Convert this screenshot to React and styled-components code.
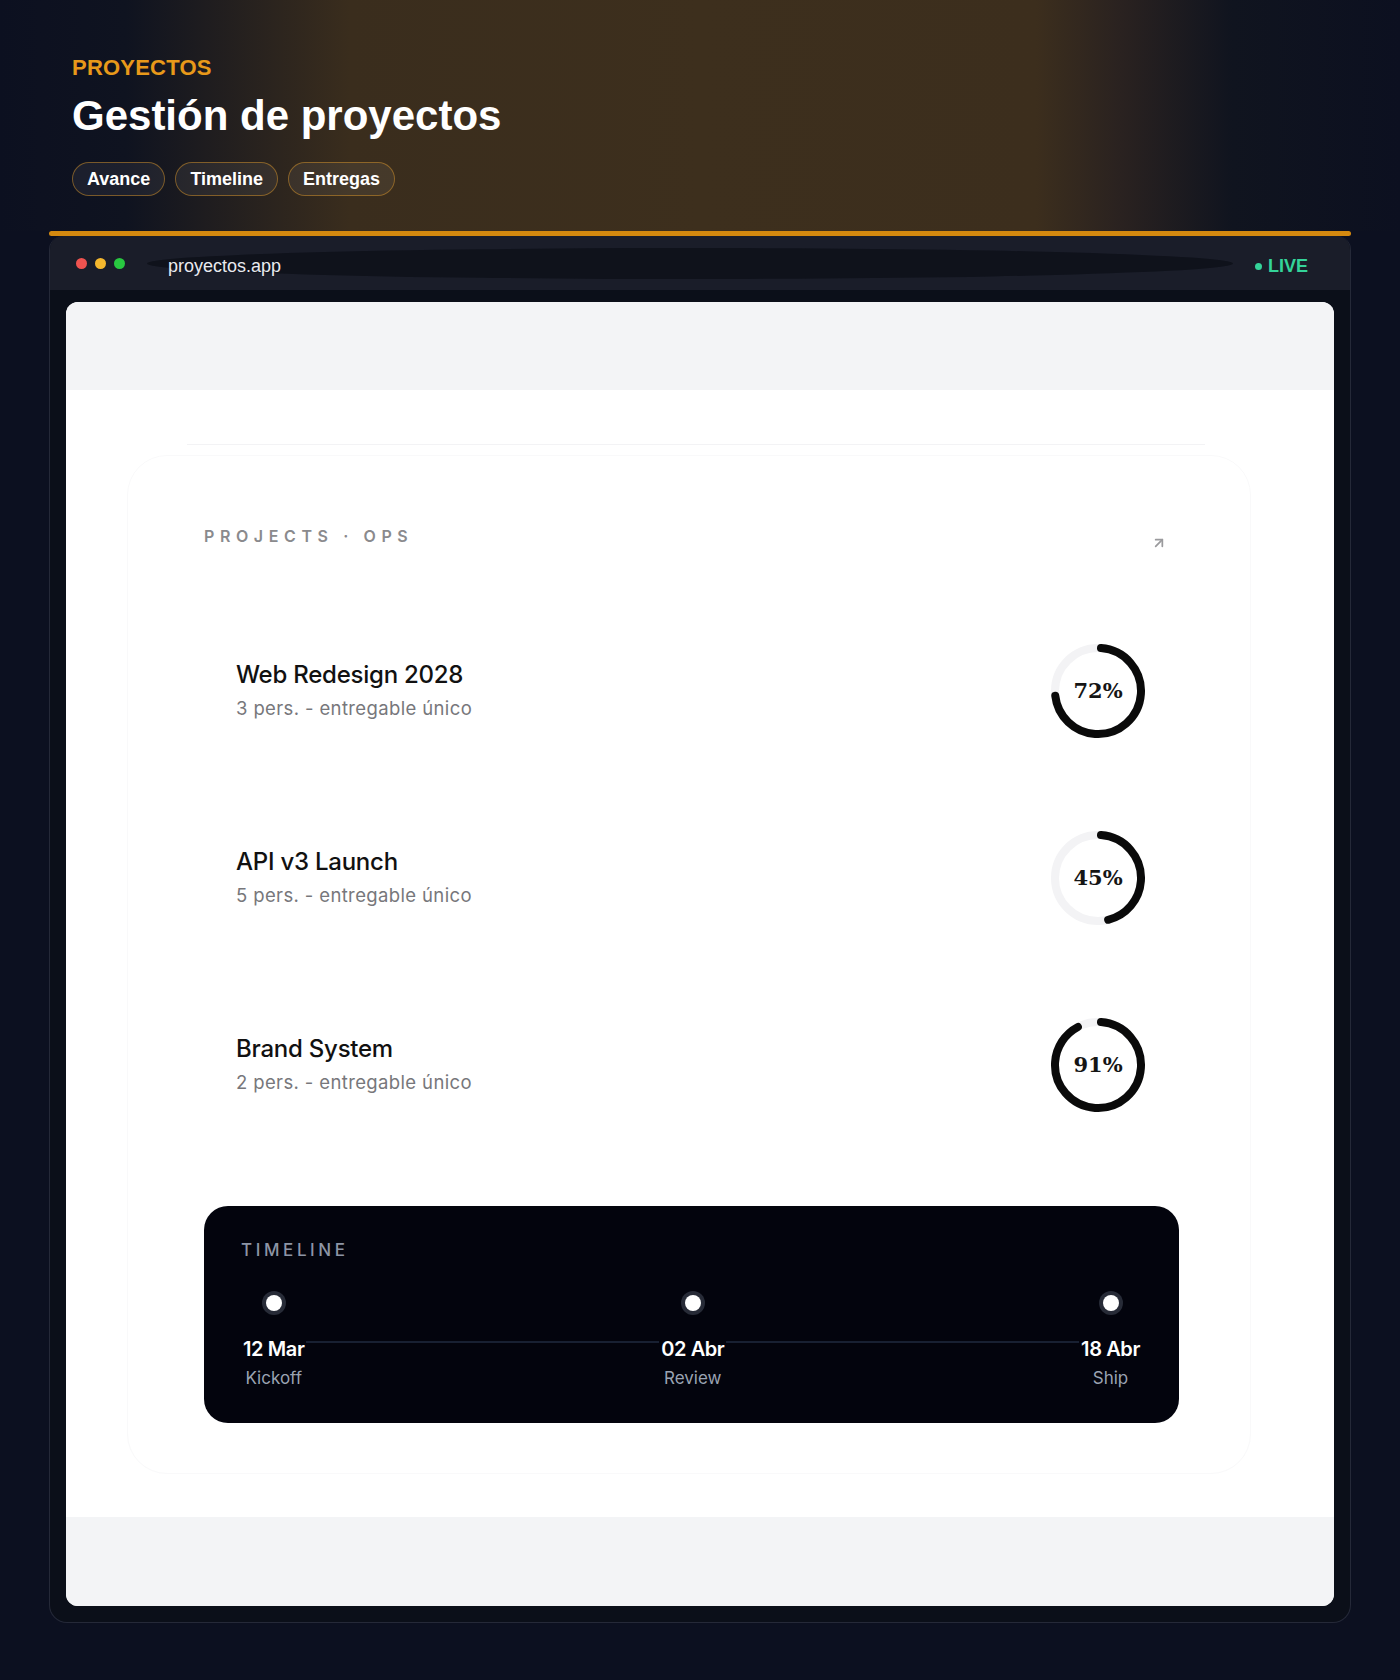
import React from 'react';
import styled, { createGlobalStyle } from 'styled-components';
import { ArrowUpRight } from 'lucide-react';

const GlobalStyle = createGlobalStyle`
	* {
		box-sizing: border-box;
	}
	body {
		margin: 0;
		background: #0c1020;
		font-family: 'Liberation Sans', Arial, sans-serif;
	}
`;

const Page = styled.div`
	min-height: 1680px;
	background: #0c1020;
	padding-bottom: 57px;
`;

const Hero = styled.header`
	padding: 55px 72px 35px;
	background: linear-gradient(
		90deg,
		#0c1020 0%,
		#0f1320 9%,
		#3a2d1d 25%,
		#3d2f1d 50%,
		#3c2e1d 74%,
		#2a2220 80%,
		#10141f 88%,
		#0c1020 100%
	);
`;

const Eyebrow = styled.div`
	font-size: 22px;
	line-height: 26px;
	font-weight: 700;
	color: #e8991a;
	letter-spacing: 0.01em;
`;

const Title = styled.h1`
	margin: 11px 0 0;
	font-size: 42px;
	line-height: 48px;
	font-weight: 700;
	color: #fff;
`;

const Pills = styled.div`
	display: flex;
	gap: 10px;
	margin-top: 22px;
`;

const Pill = styled.span`
	display: inline-flex;
	align-items: center;
	height: 34px;
	padding: 0 14px;
	border-radius: 999px;
	border: 1px solid rgba(216, 148, 40, 0.5);
	background: rgba(255, 255, 255, 0.06);
	color: #fff;
	font-size: 18px;
	font-weight: 700;
`;

const FrameWrap = styled.div`
	margin: 0 49px;
`;

const AccentBar = styled.div`
	height: 5px;
	border-radius: 3px;
	background: #d4890f;
`;

const Frame = styled.section`
	border: 1px solid #252938;
	border-top: none;
	border-radius: 14px 14px 18px 18px;
	background: #0b0f19;
	overflow: hidden;
`;

const TitleBar = styled.div`
	display: flex;
	align-items: center;
	gap: 22px;
	height: 54px;
	padding: 0 42px 0 26px;
	background: #1a1d29;
`;

const Dots = styled.div`
	display: flex;
	gap: 8px;
`;

const Dot = styled.span`
	width: 11px;
	height: 11px;
	border-radius: 50%;
	background: ${p => p.$color};
`;

const UrlBar = styled.div`
	flex: 1;
	height: 31px;
	display: flex;
	align-items: center;
	padding: 6px 0 0 21px;
	border-radius: 50%;
	background: #0f121b;
	color: #e8eaef;
	font-size: 18px;
`;

const Live = styled.div`
	display: flex;
	align-items: center;
	gap: 6px;
	margin-top: 7px;
	color: #34d399;
	font-size: 18px;
	font-weight: 700;
	&::before {
		content: '';
		width: 7px;
		height: 7px;
		border-radius: 50%;
		background: #34d399;
	}
`;

const Body = styled.div`
	padding: 12px 16px 16px;
`;

const Screen = styled.div`
	border-radius: 12px;
	overflow: hidden;
	background: #fff;
	font-family: Inter, 'Noto Sans', sans-serif;
`;

const Band = styled.div`
	height: ${p => p.$h}px;
	background: #f3f4f6;
`;

const WhiteArea = styled.div`
	padding: 54px 0 43px;
	background: #fff;
`;

const Divider = styled.div`
	height: 1px;
	margin: 0 129px 0 121px;
	background: #f3f3f5;
`;

const Card = styled.div`
	margin: 10px 83px 0 61px;
	padding: 68px 71px 50px 76px;
	border: 1px solid #f9f9fa;
	border-radius: 40px;
`;

const CardHead = styled.div`
	display: flex;
	align-items: center;
	justify-content: space-between;
	height: 24px;
	margin-bottom: 49px;
	padding-right: 12px;
`;

const CardLabel = styled.span`
	font-size: 16px;
	font-weight: 600;
	letter-spacing: 5.6px;
	color: #8a8a8d;
`;

const ArrowIcon = styled(ArrowUpRight)`
	color: #9a9a9d;
	margin-top: 14px;
`;

const Row = styled.div`
	display: flex;
	align-items: center;
	justify-content: space-between;
	height: 187px;
	padding: 0 33px 0 32px;
`;

const RowText = styled.div`
	display: flex;
	flex-direction: column;
	gap: 8px;
	margin-top: -2px;
`;

const RowTitle = styled.div`
	font-size: 24px;
	line-height: 28px;
	font-weight: 500;
	color: #111;
	letter-spacing: -0.01em;
`;

const RowSub = styled.div`
	font-size: 18.5px;
	line-height: 22px;
	color: #77777b;
	letter-spacing: 0.02em;
`;

const RingWrap = styled.div`
	position: relative;
	width: 96px;
	height: 96px;
`;

const RingLabel = styled.span`
	position: absolute;
	inset: 0;
	display: flex;
	align-items: center;
	justify-content: center;
	font-family: 'DejaVu Serif', 'Liberation Serif', serif;
	font-weight: 700;
	font-size: 21px;
	color: #151515;
`;

const Timeline = styled.div`
	margin-top: 48px;
	height: 217px;
	padding: 34px 37px 0;
	border-radius: 24px;
	background: #03040d;
`;

const TimelineLabel = styled.div`
	font-size: 17px;
	line-height: 20px;
	font-weight: 500;
	letter-spacing: 3.6px;
	color: #8d95a5;
`;

const Track = styled.div`
	position: relative;
	display: flex;
	justify-content: space-between;
	margin-top: 35px;
	&::before {
		content: '';
		position: absolute;
		left: 0;
		right: 0;
		top: 46px;
		height: 2px;
		background: #182032;
	}
`;

const Milestone = styled.div`
	position: relative;
	z-index: 1;
	display: flex;
	flex-direction: column;
	align-items: center;
`;

const MilestoneDot = styled.span`
	width: 16px;
	height: 16px;
	border-radius: 50%;
	background: #fff;
	box-shadow: 0 0 0 4px #272b37;
	margin-bottom: 26px;
`;

const MilestoneDate = styled.span`
	font-size: 20px;
	line-height: 24px;
	font-weight: 600;
	color: #fff;
	letter-spacing: -0.02em;
	background: #03040d;
	padding: 0 2px;
`;

const MilestoneName = styled.span`
	margin-top: 6px;
	font-size: 17px;
	line-height: 22px;
	color: #9aa3b2;
`;

const projects = [
	{ name: 'Web Redesign 2028', people: 3, pct: 72 },
	{ name: 'API v3 Launch', people: 5, pct: 45 },
	{ name: 'Brand System', people: 2, pct: 91 },
];

const milestones = [
	{ date: '12 Mar', name: 'Kickoff' },
	{ date: '02 Abr', name: 'Review' },
	{ date: '18 Abr', name: 'Ship' },
];

const Ring = ({ pct }) => {
	const r = 43;
	const c = 2 * Math.PI * r;
	return (
		<RingWrap>
			<svg width="96" height="96" viewBox="0 0 96 96">
				<circle cx="48" cy="48" r={r} fill="none" stroke="#f3f3f5" strokeWidth="8" />
				<circle
					cx="48"
					cy="48"
					r={r}
					fill="none"
					stroke="#0a0a0a"
					strokeWidth="8"
					strokeLinecap="round"
					strokeDasharray={`${(c * pct) / 100} ${c}`}
					transform="rotate(-86 48 48)"
				/>
			</svg>
			<RingLabel>{pct}%</RingLabel>
		</RingWrap>
	);
};

const App = () => {
	return (
		<Page>
			<GlobalStyle />
			<Hero>
				<Eyebrow>PROYECTOS</Eyebrow>
				<Title>Gestión de proyectos</Title>
				<Pills>
					<Pill>Avance</Pill>
					<Pill>Timeline</Pill>
					<Pill>Entregas</Pill>
				</Pills>
			</Hero>
			<FrameWrap>
				<AccentBar />
				<Frame>
					<TitleBar>
						<Dots>
							<Dot $color="#ef5350" />
							<Dot $color="#f5b82e" />
							<Dot $color="#28c840" />
						</Dots>
						<UrlBar>proyectos.app</UrlBar>
						<Live>LIVE</Live>
					</TitleBar>
					<Body>
						<Screen>
							<Band $h={88} />
							<WhiteArea>
								<Divider />
								<Card>
									<CardHead>
										<CardLabel>PROJECTS · OPS</CardLabel>
										<ArrowIcon size={16} strokeWidth={2.6} />
									</CardHead>
									{projects.map(p => (
										<Row key={p.name}>
											<RowText>
												<RowTitle>{p.name}</RowTitle>
												<RowSub>{p.people} pers. - entregable único</RowSub>
											</RowText>
											<Ring pct={p.pct} />
										</Row>
									))}
									<Timeline>
										<TimelineLabel>TIMELINE</TimelineLabel>
										<Track>
											{milestones.map(m => (
												<Milestone key={m.date}>
													<MilestoneDot />
													<MilestoneDate>{m.date}</MilestoneDate>
													<MilestoneName>{m.name}</MilestoneName>
												</Milestone>
											))}
										</Track>
									</Timeline>
								</Card>
							</WhiteArea>
							<Band $h={89} />
						</Screen>
					</Body>
				</Frame>
			</FrameWrap>
		</Page>
	);
};

export default App;
